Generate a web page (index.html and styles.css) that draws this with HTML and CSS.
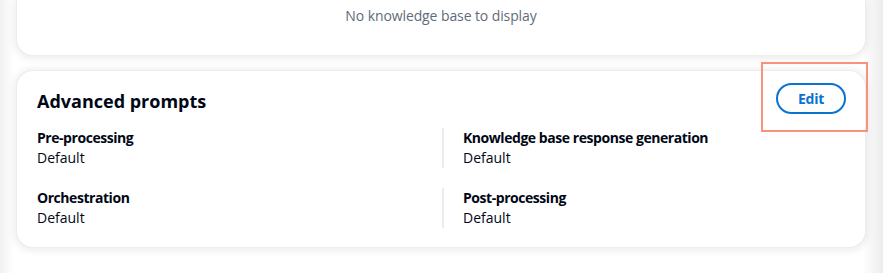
FILE: index.html
```html
<!DOCTYPE html>
<html lang="en">
<head>
<meta charset="utf-8">
<title>Advanced prompts</title>
<link rel="stylesheet" href="styles.css">
</head>
<body>
<div class="page">
  <section class="card card-top">
    <p class="empty">No knowledge base to display</p>
  </section>
  <section class="card">
    <header class="card-header">
      <h2 class="title">Advanced prompts</h2>
      <button class="btn" type="button">Edit</button>
    </header>
    <div class="grid">
      <div class="item">
        <div class="label">Pre-processing</div>
        <div class="value">Default</div>
      </div>
      <div class="item item-right">
        <div class="label">Knowledge base response generation</div>
        <div class="value">Default</div>
      </div>
      <div class="item">
        <div class="label">Orchestration</div>
        <div class="value">Default</div>
      </div>
      <div class="item item-right">
        <div class="label">Post-processing</div>
        <div class="value">Default</div>
      </div>
    </div>
  </section>
  <div class="highlight"></div>
</div>
</body>
</html>
```

FILE: styles.css
```css
* { box-sizing: border-box; }
html, body { margin: 0; padding: 0; }
body {
  font-family: "Open Sans", "Noto Sans", Arial, sans-serif;
  font-size: 14px;
  line-height: 20px;
  color: #000716;
  background:
    linear-gradient(to right, #f1f1f1 0px, rgba(255,255,255,0) 14px),
    linear-gradient(to left, #ececec 0px, rgba(255,255,255,0) 20px),
    #ffffff;
  width: 883px;
  height: 273px;
  overflow: hidden;
}
.page {
  position: relative;
  padding: 0 18px 0 17px;
  display: flex;
  flex-direction: column;
  gap: 16px;
}
.card {
  background: #fff;
  border-radius: 16px;
  box-shadow: 0 0 1px 1px #ededed, 0 1px 8px 2px rgba(0, 7, 22, 0.09);
}
.card-top {
  border-radius: 0 0 16px 16px;
  height: 55px;
  padding-top: 6px;
}
.empty {
  margin: 0;
  text-align: center;
  color: #5f6b7a;
  font-size: 14px;
  line-height: 20px;
  letter-spacing: -0.1px;
}
.card-header {
  display: flex;
  justify-content: space-between;
  align-items: flex-start;
  padding: 12px 19px 0 20px;
}
.title {
  margin: 0;
  padding-top: 6px;
  font-size: 18px;
  line-height: 24px;
  font-weight: 700;
  letter-spacing: 0;
}
.btn {
  width: 70px;
  height: 31px;
  border: 2px solid #0972d3;
  border-radius: 16px;
  background: #fff;
  color: #0972d3;
  font-family: inherit;
  font-size: 14px;
  font-weight: 700;
  line-height: 20px;
  letter-spacing: -0.2px;
  padding: 0;
  cursor: pointer;
}
.grid {
  display: grid;
  grid-template-columns: 405px 1fr;
  row-gap: 20px;
  padding: 14px 20px 19px 20px;
}
.item-right {
  border-left: 2px solid #e9ebed;
  padding-left: 19px;
}
.label {
  font-weight: 700;
  font-size: 14px;
  line-height: 20px;
  letter-spacing: -0.45px;
}
.value {
  font-size: 14px;
  line-height: 20px;
}
.highlight {
  position: absolute;
  left: 761px;
  top: 62px;
  width: 107px;
  height: 70px;
  border: 2px solid #f7937d;
  pointer-events: none;
}
```
